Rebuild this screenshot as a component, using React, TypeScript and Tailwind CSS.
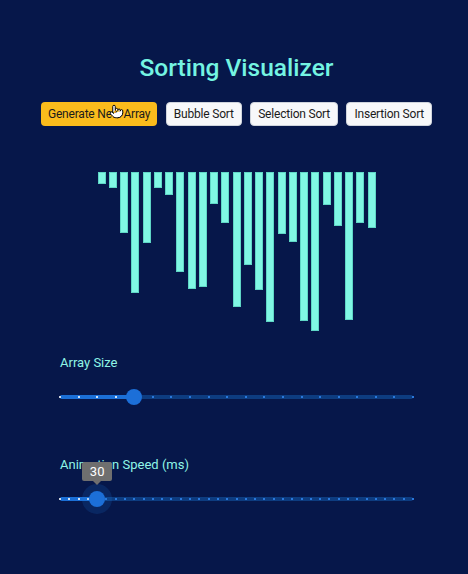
import { Pointer } from "lucide-react";

const bars = [12, 16, 61, 121, 71, 16, 23, 100, 117, 115, 32, 51, 135, 93, 118, 150, 62, 70, 149, 159, 33, 54, 148, 51, 56];

function Slider({ label, steps, value, active }: { label: string; steps: number; value: number; active?: boolean }) {
  const pct = (value / steps) * 100;
  return (
    <div className="w-[353px] flex flex-col">
      <div className="text-[13px] leading-[16px] text-[#8ff5e6]">{label}</div>
      <div className="relative h-[20px] mt-[16px]">
        <div className="absolute left-0 right-0 top-[8px] h-[4px] rounded-full bg-[#1976d2]/40" />
        <div className="absolute left-0 top-[8px] h-[4px] rounded-full bg-[#1b6fd6]" style={{ width: `${pct}%` }} />
        {Array.from({ length: steps + 1 }).map((_, i) => (
          <div
            key={i}
            className={`absolute top-[9px] w-[2px] h-[2px] -ml-[1px] ${i <= value ? "bg-white/80" : "bg-[#2a78dc]"}`}
            style={{ left: `${(i / steps) * 100}%` }}
          />
        ))}
        <div
          className={`absolute top-[2px] w-[16px] h-[16px] -ml-[8px] rounded-full bg-[#1c6fd8] ${active ? "shadow-[0_0_0_7px_rgba(25,118,210,0.18)]" : ""}`}
          style={{ left: `${pct}%` }}
        />
        {active && (
          <div className="absolute bottom-[24px] -ml-[15px] flex flex-col items-center" style={{ left: `${pct}%` }}>
            <div className="w-[30px] h-[19px] rounded-[2px] bg-[#6f6f6f] text-white text-[13px] leading-[19px] text-center">30</div>
            <div className="w-0 h-0 border-l-[4px] border-r-[4px] border-t-[4px] border-l-transparent border-r-transparent border-t-[#6f6f6f]" />
          </div>
        )}
      </div>
    </div>
  );
}

export default function App() {
  return (
    <div className="w-[468px] h-[574px] bg-[#06174a] flex flex-col items-center pl-[5px] pt-[52px] font-['Roboto','Liberation_Sans',Arial,sans-serif]">
      <h1 className="text-[24.5px] leading-[32px] font-medium text-[#74f4e2]">Sorting Visualizer</h1>

      <div className="flex gap-[8.5px] mt-[18px] text-[12px] tracking-[-0.2px] text-[#1b1b1b]">
        <button className="relative h-[24px] px-[7px] rounded-[4px] bg-[#fbbc1c]">
          Generate New Array
          <Pointer size={15} fill="white" color="black" strokeWidth={1.6} className="absolute left-[68px] top-[2px]" />
        </button>
        <button className="h-[24px] px-[7px] rounded-[4px] bg-[#f7f8fa] border border-[#cfd4dc]">Bubble Sort</button>
        <button className="h-[24px] px-[7px] rounded-[4px] bg-[#f7f8fa] border border-[#cfd4dc]">Selection Sort</button>
        <button className="h-[24px] px-[7px] rounded-[4px] bg-[#f7f8fa] border border-[#cfd4dc]">Insertion Sort</button>
      </div>

      <div className="flex items-start gap-[3.25px] mt-[46px] h-[159px]">
        {bars.map((h, i) => (
          <div key={i} className="w-[8px] bg-[#80f7e4] border border-[#5fd6c6]" style={{ height: `${h}px` }} />
        ))}
      </div>

      <div className="mt-[24px]">
        <Slider label="Array Size" steps={19} value={4} />
      </div>
      <div className="mt-[50px]">
        <Slider label="Animation Speed (ms)" steps={38} value={4} active />
      </div>
    </div>
  );
}
